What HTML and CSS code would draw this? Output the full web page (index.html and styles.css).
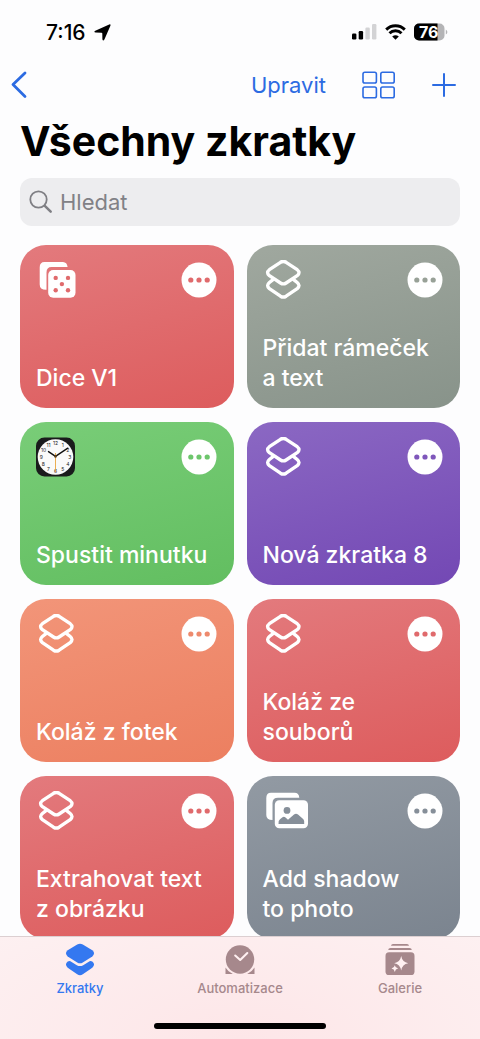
FILE: index.html
```html
<!DOCTYPE html>
<html lang="cs">
<head>
<meta charset="utf-8">
<meta name="viewport" content="width=device-width, initial-scale=1">
<title>Všechny zkratky</title>
<link rel="stylesheet" href="styles.css">
</head>
<body>
<svg class="sprite" aria-hidden="true">
  <symbol id="stack" viewBox="0 0 40 40">
    <g fill="none" stroke="currentColor" stroke-width="3.4" stroke-linejoin="round">
      <path d="M17.5 2.3Q20.3 .6 23.1 2.3L34.2 9.7Q37.8 12.6 34.2 15.6L23.1 23Q20.3 24.8 17.5 23L6.4 15.6Q2.8 12.6 6.4 9.7Z"/>
      <path d="M10.6 19.2L6.4 22.5Q2.8 25.6 6.4 28.6L17.5 36.2Q20.3 38 23.1 36.2L34.2 28.6Q37.8 25.6 34.2 22.5L30 19.2"/>
    </g>
  </symbol>
  <symbol id="more" viewBox="0 0 36 36">
    <circle cx="18" cy="18" r="17.5" fill="#fff"/>
    <g fill="currentColor"><circle cx="9.8" cy="18" r="2.6"/><circle cx="18" cy="18" r="2.6"/><circle cx="26.2" cy="18" r="2.6"/></g>
  </symbol>
</svg>

<div class="app">
  <div class="status">
    <div class="status-side">
      <time>7:16</time>
      <svg width="17" height="17" viewBox="0 0 17 17" aria-hidden="true"><path d="M15.2.5Q17-.1 16.4 1.7L10.4 15.6Q9 17.6 8.4 15.2L8.3 9.5Q8.3 8.7 7.5 8.7L1.6 8.6Q-.7 8 1.3 6.7Z"/></svg>
    </div>
    <div class="status-side">
      <svg width="25" height="16" viewBox="0 0 25 16" aria-hidden="true"><rect x="0" y="9.5" width="4.4" height="6" rx="1.2"/><rect x="6.7" y="7" width="4.4" height="8.5" rx="1.2"/><g fill="#d3d3d5"><rect x="13.4" y="3.5" width="4.4" height="12" rx="1.2"/><rect x="20" y="0" width="4.4" height="15.5" rx="1.2"/></g></svg>
      <svg width="21" height="16" viewBox="0 0 21 16" aria-hidden="true"><g fill="none" stroke="#000" stroke-width="2.9"><path d="M1.2 5.6A13.2 13.2 0 0 1 19.8 5.6"/><path d="M4.5 9.2A8.5 8.5 0 0 1 16.5 9.2"/></g><path d="M10.5 15.8L7.2 12.5Q10.5 9.8 13.8 12.5Z"/></svg>
      <svg width="34" height="18" viewBox="0 0 34 18" aria-label="Baterie 76 %"><clipPath id="cell"><rect x="0" y="0.5" width="30.5" height="17" rx="5"/></clipPath><g clip-path="url(#cell)"><rect width="31" height="18" fill="#b4b4b6"/><rect width="23.5" height="18"/></g><path d="M31.8 6.4Q33.4 7.4 33.4 9T31.8 11.6Z" fill="#b4b4b6"/><text class="battery-text" x="14.8" y="14.6" text-anchor="middle">76</text></svg>
    </div>
  </div>

  <nav class="toolbar" aria-label="Nástroje">
    <button class="tool" type="button" aria-label="Zpět"><svg width="16" height="28" viewBox="0 0 16 28"><path d="M14 2L2 13.5L14 25.5" fill="none" stroke="currentColor" stroke-width="2.8" stroke-linecap="round" stroke-linejoin="round"/></svg></button>
    <div class="tools">
      <button class="tool" type="button">Upravit</button>
      <button class="tool" type="button" aria-label="Zobrazení"><svg width="34" height="28" viewBox="0 0 34 28"><g fill="none" stroke="currentColor" stroke-width="1.6"><rect x="1" y="1.3" width="13.4" height="10.7" rx="1.8"/><rect x="18.8" y="1.3" width="13.4" height="10.7" rx="1.8"/><rect x="1" y="16" width="13.4" height="10.7" rx="1.8"/><rect x="18.8" y="16" width="13.4" height="10.7" rx="1.8"/></g></svg></button>
      <button class="tool" type="button" aria-label="Nová zkratka"><svg width="24" height="24" viewBox="0 0 24 24"><path d="M12 1V23M1 12H23" fill="none" stroke="currentColor" stroke-width="2" stroke-linecap="round"/></svg></button>
    </div>
  </nav>

  <main class="content">
    <h1 class="title">Všechny zkratky</h1>
    <label class="search">
      <svg width="24" height="24" viewBox="0 0 24 24" aria-hidden="true"><g fill="none" stroke="#7f7f84" stroke-linecap="round"><circle cx="9.5" cy="9.5" r="8.2" stroke-width="1.8"/><path d="M15.8 15.8L21.7 21.7" stroke-width="2.5"/></g></svg>
      <input class="search-input" type="search" placeholder="Hledat" aria-label="Hledat">
    </label>

    <div class="grid">
      <article class="card red">
        <div class="card-head">
          <svg class="card-icon" viewBox="0 0 40 40" aria-hidden="true"><path d="M8.5 2H27Q31 2.2 31.6 7H15.5Q10.5 7 10.5 12.5V29.8Q3.7 30 3.7 24.5V7.5Q3.7 2 8.5 2Z" fill="#fff"/><rect x="12.2" y="10" width="27.3" height="27.8" rx="5" fill="#fff"/><g class="tint"><circle cx="19.7" cy="17.9" r="2.2"/><circle cx="32" cy="17.9" r="2.2"/><circle cx="25.9" cy="24.1" r="2.2"/><circle cx="19.7" cy="30.3" r="2.2"/><circle cx="32" cy="30.3" r="2.2"/></g></svg>
          <button class="more" type="button" aria-label="Další: Dice V1"><svg><use href="#more"/></svg></button>
        </div>
        <h2 class="name">Dice V1</h2>
      </article>
      <article class="card sage">
        <div class="card-head">
          <svg class="card-icon" aria-hidden="true"><use href="#stack"/></svg>
          <button class="more" type="button" aria-label="Další: Přidat rámeček a text"><svg><use href="#more"/></svg></button>
        </div>
        <h2 class="name">Přidat rámeček<br>a text</h2>
      </article>
      <article class="card green">
        <div class="card-head">
          <svg class="card-icon" viewBox="0 0 40 40" aria-hidden="true"><rect x="0" y="0.5" width="39" height="39" rx="8.5" fill="#1a1b1c"/><circle cx="19.5" cy="20" r="17.8" fill="#fafafa"/>
            <g class="dial"><text x="19.5" y="7.8">12</text><text x="26.7" y="9.8">1</text><text x="31.8" y="14.8">2</text><text x="33.8" y="21.8">3</text><text x="31.8" y="28.8">4</text><text x="26.7" y="34">5</text><text x="19.5" y="35.8">6</text><text x="12.3" y="34">7</text><text x="7.2" y="28.8">8</text><text x="5.2" y="21.8">9</text><text x="7.6" y="14.8">10</text><text x="12.5" y="9.8">11</text></g>
            <path d="M19.5 16V35" stroke="#e9a53e" stroke-width="0.9"/><path d="M12.5 14.6L19.5 19.4L31.8 11.2" fill="none" stroke="#111" stroke-width="1.4" stroke-linecap="round"/><circle cx="19.5" cy="19.4" r="1.3" fill="#5f4320"/></svg>
          <button class="more" type="button" aria-label="Další: Spustit minutku"><svg><use href="#more"/></svg></button>
        </div>
        <h2 class="name">Spustit minutku</h2>
      </article>
      <article class="card purple">
        <div class="card-head">
          <svg class="card-icon" aria-hidden="true"><use href="#stack"/></svg>
          <button class="more" type="button" aria-label="Další: Nová zkratka 8"><svg><use href="#more"/></svg></button>
        </div>
        <h2 class="name">Nová zkratka 8</h2>
      </article>
      <article class="card orange">
        <div class="card-head">
          <svg class="card-icon" aria-hidden="true"><use href="#stack"/></svg>
          <button class="more" type="button" aria-label="Další: Koláž z fotek"><svg><use href="#more"/></svg></button>
        </div>
        <h2 class="name">Koláž z fotek</h2>
      </article>
      <article class="card red">
        <div class="card-head">
          <svg class="card-icon" aria-hidden="true"><use href="#stack"/></svg>
          <button class="more" type="button" aria-label="Další: Koláž ze souborů"><svg><use href="#more"/></svg></button>
        </div>
        <h2 class="name">Koláž ze<br>souborů</h2>
      </article>
      <article class="card red">
        <div class="card-head">
          <svg class="card-icon" aria-hidden="true"><use href="#stack"/></svg>
          <button class="more" type="button" aria-label="Další: Extrahovat text z obrázku"><svg><use href="#more"/></svg></button>
        </div>
        <h2 class="name">Extrahovat text<br>z obrázku</h2>
      </article>
      <article class="card slate">
        <div class="card-head">
          <svg class="card-icon wide" viewBox="0 0 46 40" aria-hidden="true"><path d="M8 1.8H31.5Q36 1.8 36.3 6.7H15Q9.5 6.7 9.5 12V29Q3.3 29 3.3 24V7Q3.3 1.8 8 1.8Z" fill="#fff"/><rect x="11.8" y="9.3" width="33.2" height="28" rx="4.5" fill="#fff"/><g class="tint"><circle cx="24" cy="19.4" r="3.4"/><path d="M15.5 33Q14.8 30 17 28.3L19.5 26.3Q21 25.3 22.5 26.6L25 28.8L31 23.5Q33 21.8 35 23.5L40.4 28.3Q41.5 29.5 41.2 33Z"/></g></svg>
          <button class="more" type="button" aria-label="Další: Add shadow to photo"><svg><use href="#more"/></svg></button>
        </div>
        <h2 class="name">Add shadow<br>to photo</h2>
      </article>
    </div>
  </main>

  <footer class="tabbar">
    <nav class="tabs" aria-label="Sekce">
      <a class="tab active" href="#zkratky" aria-current="page">
        <svg width="32" height="34" viewBox="0 0 32 34" aria-hidden="true"><g fill="currentColor"><path d="M13.2 1.6Q16 0 18.8 1.6L28.3 7.3Q31.8 10.3 28.3 13.4L18.8 19.5Q16 21.2 13.2 19.5L3.7 13.4Q.2 10.3 3.7 7.3Z"/><path d="M3.7 18.6Q5.2 17.4 6.4 18.2L12.8 22.2Q16 24 19.2 22.2L25.6 18.2Q26.8 17.4 28.3 18.6Q31.8 21.7 28.3 24.7L18.8 31.2Q16 33.2 13.2 31.2L3.7 24.7Q.2 21.7 3.7 18.6Z"/></g></svg>
        <span>Zkratky</span>
      </a>
      <a class="tab" href="#automatizace">
        <svg width="32" height="34" viewBox="0 0 32 34" aria-hidden="true"><g fill="currentColor"><circle cx="16" cy="16.5" r="14.2"/><path d="M1.5 24.5A16.2 16.2 0 0 0 8.8 31H1.5ZM30.5 24.5A16.2 16.2 0 0 1 23.2 31H30.5Z"/></g><path d="M11.2 12.5L16.2 17L23.3 10" fill="none" stroke="#fff0f1" stroke-width="2.1" stroke-linecap="round" stroke-linejoin="round"/></svg>
        <span>Automatizace</span>
      </a>
      <a class="tab" href="#galerie">
        <svg width="32" height="34" viewBox="0 0 32 34" aria-hidden="true"><g fill="currentColor"><path d="M7 2.7Q7.2.9 9 .9H23Q24.8.9 25 2.7ZM4.2 7Q4.4 5 6.5 5H25.5Q27.6 5 27.8 7Z"/><rect x="1.5" y="9.3" width="29" height="22.7" rx="3.6"/></g><g fill="#fff0f1"><path d="M17.2 13Q18.3 19.2 24.2 20.2Q18.3 21.2 17.2 27.4Q16.1 21.2 10.2 20.2Q16.1 19.2 17.2 13Z"/><path d="M10.8 22.3Q11.3 25.1 14.1 25.6Q11.3 26.1 10.8 28.9Q10.3 26.1 7.5 25.6Q10.3 25.1 10.8 22.3Z"/></g></svg>
        <span>Galerie</span>
      </a>
    </nav>
    <div class="home-indicator"></div>
  </footer>
</div>
</body>
</html>
```
FILE: styles.css
```css
* {
  box-sizing: border-box;
}

body {
  margin: 0;
  background: #fdfdfe;
  color: #000;
  font-family: Inter, "Liberation Sans", sans-serif;
}

svg {
  display: block;
  flex: none;
}

button {
  padding: 0;
  border: 0;
  background: none;
  color: inherit;
  font: inherit;
  cursor: pointer;
}

.sprite {
  position: absolute;
  width: 0;
  height: 0;
}

.app {
  display: flex;
  flex-direction: column;
  height: 100vh;
}

.status {
  display: flex;
  align-items: center;
  justify-content: space-between;
  flex: none;
  height: 64px;
  padding: 0 32px 0 46px;
  font-size: 21px;
  font-weight: 500;
}

.status-side {
  display: flex;
  align-items: center;
  gap: 8px;
}

.battery-text {
  fill: #fff;
  font-size: 16px;
  font-weight: 700;
}

.toolbar {
  display: flex;
  align-items: center;
  justify-content: space-between;
  flex: none;
  height: 42px;
  padding: 0 24px 0 11px;
  color: #2c6be2;
  font-size: 22px;
}

.tools {
  display: flex;
  align-items: center;
  gap: 36px;
}

.content {
  flex: 1;
  min-height: 0;
  padding: 11px 20px 0;
  overflow-y: auto;
  scrollbar-width: none;
}

.title {
  margin: 0 0 13px;
  font-size: 41px;
  font-weight: 700;
  line-height: 48px;
}

.search {
  display: flex;
  align-items: center;
  gap: 7px;
  height: 48px;
  margin-bottom: 19px;
  padding: 0 9px;
  border-radius: 12px;
  background: #ededef;
}

.search-input {
  flex: 1;
  min-width: 0;
  padding: 0;
  border: 0;
  outline: 0;
  background: none;
  color: #000;
  font: inherit;
  font-size: 22px;
}

.search-input::placeholder {
  color: #818186;
  opacity: 1;
}

.grid {
  display: grid;
  grid-template-columns: 1fr 1fr;
  gap: 14px 13px;
}

.card {
  display: flex;
  flex-direction: column;
  justify-content: space-between;
  height: 163px;
  padding: 15px 17px 15px 16px;
  border-radius: 26px;
  background: linear-gradient(165deg, var(--from), var(--to));
  color: #fff;
}

.red {
  --from: #e37a7d;
  --to: #dd5c5d;
  --tint: #e06a6c;
}

.sage {
  --from: #a0a89f;
  --to: #88938a;
  --tint: #98a197;
}

.green {
  --from: #79cd78;
  --to: #62be60;
  --tint: #6dc66c;
}

.purple {
  --from: #8b68c3;
  --to: #7348b4;
  --tint: #7f57bb;
}

.orange {
  --from: #f29579;
  --to: #ec7f60;
  --tint: #ee8a6d;
}

.slate {
  --from: #929aa3;
  --to: #7b848f;
  --tint: #868f99;
}

.card-head {
  display: flex;
  align-items: center;
  justify-content: space-between;
}

.card-icon {
  width: 40px;
  height: 40px;
}

.card-icon.wide {
  width: 46px;
}

.tint {
  fill: var(--tint);
}

.dial {
  fill: #222;
  font-size: 5px;
  font-weight: 400;
  text-anchor: middle;
}

.more {
  color: var(--tint);
}

.more svg {
  width: 36px;
  height: 36px;
}

.name {
  margin: 0;
  font-size: 23px;
  font-weight: 500;
  line-height: 30px;
  white-space: nowrap;
}

.tabbar {
  display: flex;
  flex-direction: column;
  align-items: center;
  justify-content: space-between;
  flex: none;
  height: 103px;
  padding: 6px 0 10px;
  border-top: 1px solid #dccfd1;
  background: radial-gradient(ellipse at 50% 100%, #fde6e8, #fdf0f1);
}

.tabs {
  display: grid;
  grid-template-columns: 1fr 1fr 1fr;
  width: 100%;
}

.tab {
  display: flex;
  flex-direction: column;
  align-items: center;
  gap: 2px;
  color: #a6888c;
  font-size: 13px;
  font-weight: 500;
  line-height: 18px;
  text-decoration: none;
}

.tab.active {
  color: #3478f0;
}

.home-indicator {
  width: 36%;
  height: 6px;
  border-radius: 3px;
  background: #000;
}
```
